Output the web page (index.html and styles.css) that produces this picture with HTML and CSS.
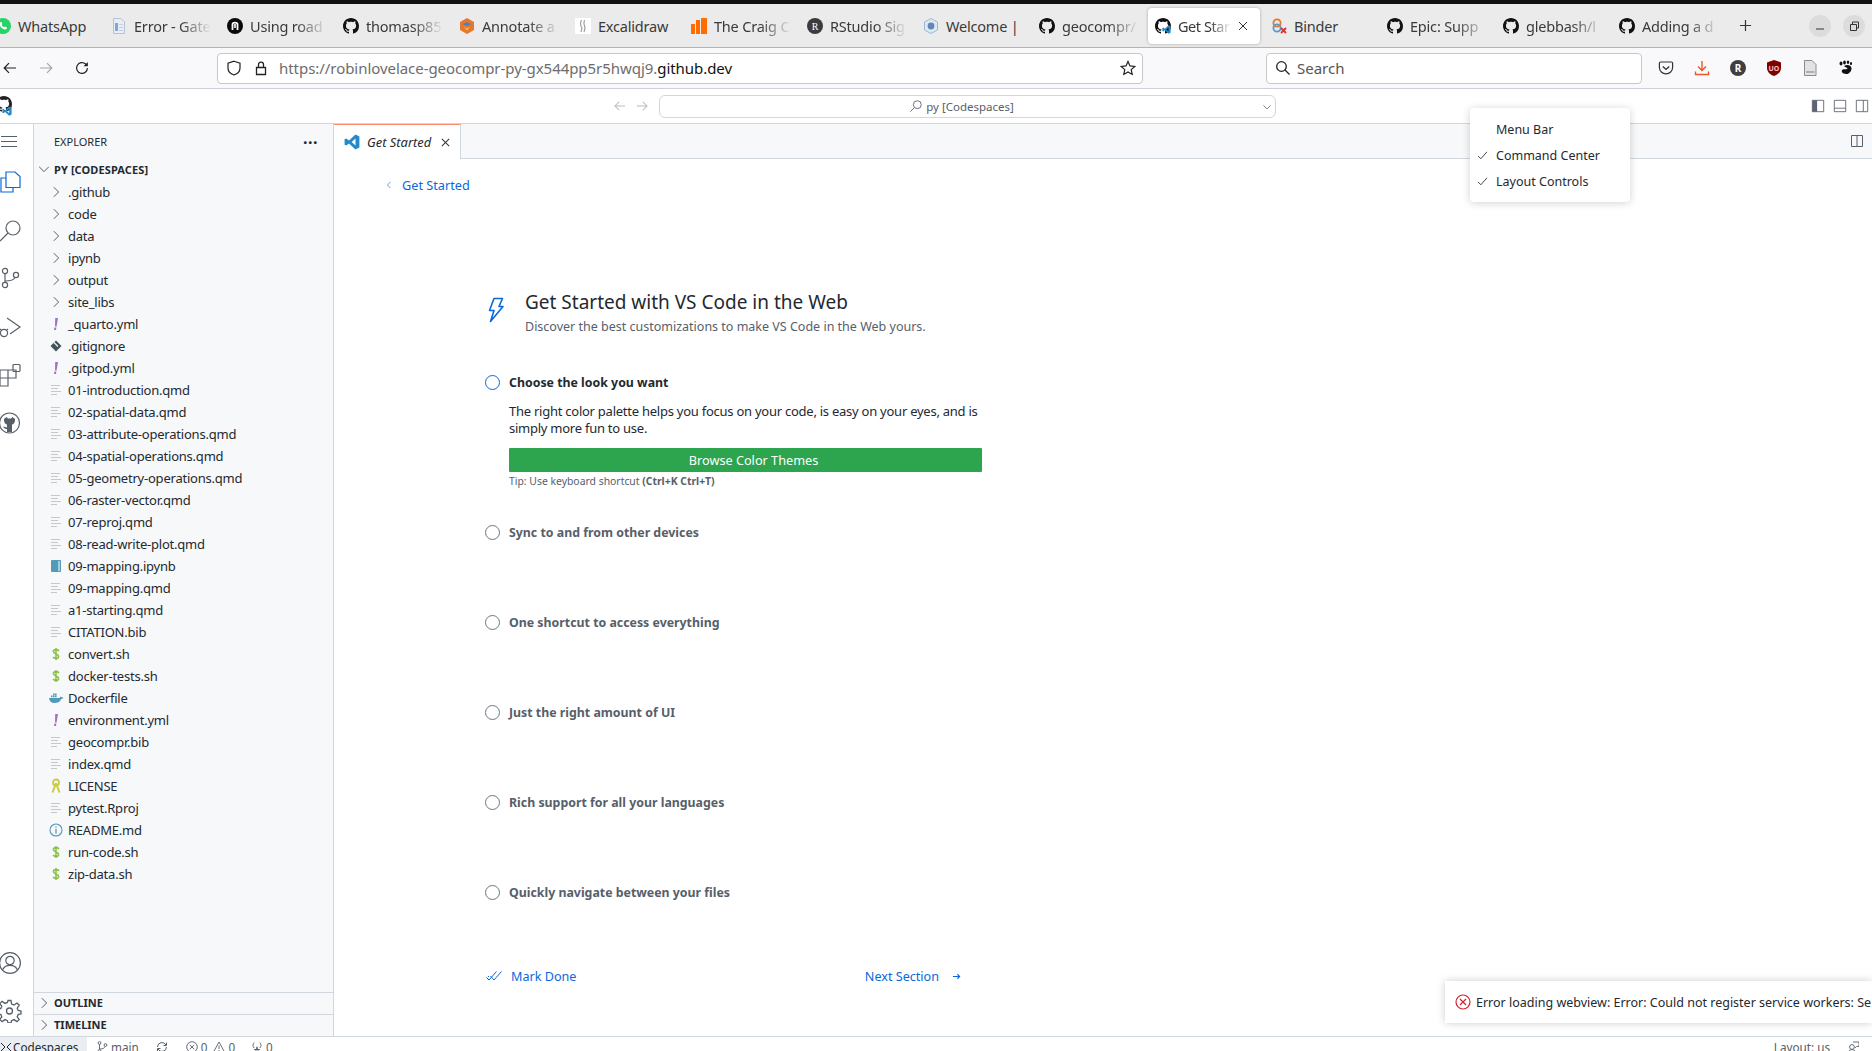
FILE: index.html
```html
<!DOCTYPE html>
<html lang="en">
<head>
<meta charset="utf-8">
<title>Get Started</title>
<link rel="stylesheet" href="styles.css">
</head>
<body>
<svg class="defs" width="0" height="0" aria-hidden="true">
  <symbol id="gh" viewBox="0 0 16 16"><path fill="currentColor" d="M8 0C3.58 0 0 3.58 0 8c0 3.54 2.29 6.53 5.47 7.59.4.07.55-.17.55-.38 0-.19-.01-.82-.01-1.49-2.01.37-2.53-.49-2.69-.94-.09-.23-.48-.94-.82-1.13-.28-.15-.68-.52-.01-.53.63-.01 1.08.58 1.23.82.72 1.21 1.87.87 2.33.66.07-.52.28-.87.51-1.07-1.78-.2-3.64-.89-3.64-3.95 0-.87.31-1.59.82-2.15-.08-.2-.36-1.02.08-2.12 0 0 .67-.21 2.2.82.64-.18 1.32-.27 2-.27.68 0 1.36.09 2 .27 1.53-1.04 2.2-.82 2.2-.82.44 1.1.16 1.92.08 2.12.51.56.82 1.27.82 2.15 0 3.07-1.87 3.75-3.65 3.95.29.25.54.73.54 1.48 0 1.07-.01 1.93-.01 2.2 0 .21.15.46.55.38A8.013 8.013 0 0016 8c0-4.42-3.58-8-8-8z"/></symbol>
  <symbol id="vsc" viewBox="0 0 16 16"><path fill="#2489ca" d="M11.5 0.6 15.4 2.4V13.6L11.5 15.4 5 9.4 2.2 11.6.6 10.8V5.2L2.2 4.4 5 6.6ZM11.5 4.6 7.6 8 11.5 11.4Z"/></symbol>
  <symbol id="chev-r" viewBox="0 0 16 16"><path fill="none" stroke="currentColor" stroke-width="1" d="M5.8 3.2 10.6 8 5.8 12.8"/></symbol>
  <symbol id="chev-d" viewBox="0 0 16 16"><path fill="none" stroke="currentColor" stroke-width="1" d="M3.2 5.8 8 10.6 12.8 5.8"/></symbol>
  <symbol id="lines" viewBox="0 0 16 16"><path fill="none" stroke="#c4c7cc" stroke-width="1" d="M3 3.5H12M3 6.5H10M3 9.5H13M3 12.5H9"/></symbol>
  <symbol id="bang" viewBox="0 0 16 16"><path fill="#a074c4" d="M7.2 2H10L8.6 10.4H7ZM6.4 11.6H8.4L8 14H6Z"/></symbol>
  <symbol id="dollar" viewBox="0 0 16 16"><path fill="none" stroke="#8dc149" stroke-width="1.6" d="M10.6 5.2C10.6 4 9.4 3.6 8 3.6S5.4 4.2 5.4 5.6C5.4 8.6 10.6 7.4 10.6 10.4 10.6 11.8 9.4 12.4 8 12.4S5.4 12 5.4 10.8M8 2V14"/></symbol>
  <symbol id="split" viewBox="0 0 16 16"><path fill="none" stroke="currentColor" stroke-width="1" d="M2.5 2.5H13.5V13.5H2.5ZM8 2.5V13.5"/></symbol>
  <symbol id="search" viewBox="0 0 16 16"><circle cx="9.5" cy="6.5" r="4.5" fill="none" stroke="currentColor"/><path fill="none" stroke="currentColor" d="M6.2 9.8 1.5 14.5"/></symbol>
  <symbol id="arrow-l" viewBox="0 0 16 16"><path fill="none" stroke="currentColor" stroke-width="1.2" d="M14 8H2.5M7 3.2 2.2 8 7 12.8"/></symbol>
  <symbol id="arrow-r" viewBox="0 0 16 16"><path fill="none" stroke="currentColor" stroke-width="1.2" d="M2 8H13.5M9 3.2 13.8 8 9 12.8"/></symbol>
  <symbol id="check" viewBox="0 0 16 16"><path fill="none" stroke="currentColor" stroke-width="1.2" d="M2.5 8.5 6 12 13.5 3.5"/></symbol>
</svg>

<div class="topblack"></div>

<div class="tabstrip">
  <div class="tab"><svg class="fav" viewBox="0 0 16 16"><circle cx="8" cy="8" r="8" fill="#25d366"/><path fill="#fff" d="M5.3 4.2 6.6 4 7.4 6 6.7 7C7.2 8 8 8.8 9.1 9.3L10 8.5 12 9.4 11.7 10.8C10.8 12 8.4 11.6 6.4 9.7 4.6 8 4 5.6 5.3 4.2Z"/></svg><span class="tab-title clear">WhatsApp</span></div>
  <div class="tab"><svg class="fav" viewBox="0 0 16 16"><path fill="#e8eef6" stroke="#b6c3d3" d="M2.5.5H10L13.5 4V15.5H2.5Z"/><path fill="#7fa8d8" d="M4 5H7V13H4Z"/><path fill="#c4d0de" d="M8 6H12V7H8ZM8 9H12V10H8ZM8 12H12V13H8Z"/></svg><span class="tab-title">Error - Gate</span></div>
  <div class="tab"><svg class="fav" viewBox="0 0 16 16"><circle cx="8" cy="8" r="8" fill="#0a0a0a"/><path fill="none" stroke="#fff" stroke-width="1.8" d="M5.5 12V6.6C5.5 4 10.5 4 10.5 6.6V12"/><path stroke="#fff" stroke-width="1.6" d="M8 6V10"/></svg><span class="tab-title">Using road</span></div>
  <div class="tab"><svg class="fav dark"><use href="#gh"/></svg><span class="tab-title">thomasp85</span></div>
  <div class="tab"><svg class="fav" viewBox="0 0 16 16"><path fill="#e8762d" d="M8 0 15 4V12L8 16 1 12V4Z"/><path fill="#3f87c6" d="M3.5 6 8 4.2 12.5 6 8 8.2Z"/><path fill="#f6c343" d="M5 9 8 10.5 11 9 8 12.5Z"/></svg><span class="tab-title">Annotate a</span></div>
  <div class="tab"><svg class="fav" viewBox="0 0 16 16"><rect width="16" height="16" fill="#fff"/><path fill="none" stroke="#a0a0a0" stroke-width="1.2" d="M6.5 2C5 5 5.5 8 7 10L6 14M9.5 2C8 5 9.5 8 10 10L9 14"/></svg><span class="tab-title clear">Excalidraw</span></div>
  <div class="tab"><svg class="fav" viewBox="0 0 16 16"><path fill="#ff6d00" d="M0 6H4V16H0ZM5 2H9V16H5ZM10 0H16V16H10Z"/></svg><span class="tab-title">The Craig C</span></div>
  <div class="tab"><svg class="fav" viewBox="0 0 16 16"><circle cx="8" cy="8" r="8" fill="#3c3c3c"/><text class="fav-r" x="8" y="11.5">R</text></svg><span class="tab-title">RStudio Sig</span></div>
  <div class="tab"><svg class="fav" viewBox="0 0 16 16"><path fill="#dfe8f2" stroke="#9db7d6" d="M8 .5 14.5 4V12L8 15.5 1.5 12V4Z"/><circle cx="8" cy="8" r="3.4" fill="#5f86b5"/></svg><span class="tab-title clear">Welcome |</span></div>
  <div class="tab"><svg class="fav dark"><use href="#gh"/></svg><span class="tab-title">geocompr/</span></div>
  <div class="tab active"><svg class="fav dark"><use href="#gh"/><use href="#vsc" x="7" y="7" width="9" height="9"/></svg><span class="tab-title">Get Start</span><svg class="tab-x" viewBox="0 0 12 12"><path stroke="currentColor" d="M2 2 10 10M10 2 2 10"/></svg></div>
  <div class="tab"><svg class="fav" viewBox="0 0 16 16"><circle cx="6" cy="5" r="3.6" fill="none" stroke="#e8762d" stroke-width="1.8"/><circle cx="6" cy="10" r="3.6" fill="none" stroke="#579aca" stroke-width="1.8"/><path stroke="#e03030" stroke-width="1.8" d="M10 10 15 15M15 10 10 15"/></svg><span class="tab-title clear">Binder</span></div>
  <div class="tab"><svg class="fav dark"><use href="#gh"/></svg><span class="tab-title">Epic: Supp</span></div>
  <div class="tab"><svg class="fav dark"><use href="#gh"/></svg><span class="tab-title">glebbash/l</span></div>
  <div class="tab"><svg class="fav dark"><use href="#gh"/></svg><span class="tab-title">Adding a d</span></div>
  <svg class="newtab" viewBox="0 0 14 14"><path stroke="currentColor" stroke-width="1.3" d="M7 1V13M1 7H13"/></svg>
  <div class="winctl">
    <span class="winbtn"><svg viewBox="0 0 12 12"><path stroke="#333" d="M2 9H10"/></svg></span>
    <span class="winbtn"><svg viewBox="0 0 12 12"><path fill="none" stroke="#333" d="M2.5 4.5H8.5V10.5H2.5ZM4.5 4V2H10.5V8H9"/></svg></span>
  </div>
</div>

<div class="toolbar">
  <div class="navbtns">
    <svg class="nav-ic"><use href="#arrow-l"/></svg>
    <svg class="nav-ic off"><use href="#arrow-r"/></svg>
    <svg class="nav-ic" viewBox="0 0 16 16"><path fill="none" stroke="currentColor" stroke-width="1.2" d="M13.4 8A5.4 5.4 0 1 1 11.6 4L13.2 5.4"/><path fill="currentColor" d="M13.8 2V6.2H9.6Z"/></svg>
  </div>
  <div class="urlbar">
    <svg class="url-ic" viewBox="0 0 16 16"><path fill="none" stroke="#222" stroke-width="1.2" d="M8 1.2 14 3.2V8C14 11.5 11 14 8 15 5 14 2 11.5 2 8V3.2Z"/></svg>
    <svg class="url-ic" viewBox="0 0 16 16"><path fill="none" stroke="#222" stroke-width="1.3" d="M3.5 7.5H12.5V14.5H3.5ZM5.5 7.5V4.5C5.5 1.2 10.5 1.2 10.5 4.5V7.5"/></svg>
    <span class="url"><span class="url-dim">https://robinlovelace-geocompr-py-gx544pp5r5hwqj9.</span>github.dev</span>
    <svg class="url-star" viewBox="0 0 16 16"><path fill="none" stroke="#222" stroke-width="1.2" d="M8 1.4 10 5.9 14.8 6.4 11.2 9.6 12.2 14.4 8 11.9 3.8 14.4 4.8 9.6 1.2 6.4 6 5.9Z"/></svg>
  </div>
  <div class="searchbar">
    <svg class="url-ic small" viewBox="0 0 16 16"><circle cx="6.5" cy="6.5" r="4.8" fill="none" stroke="#222" stroke-width="1.3"/><path stroke="#222" stroke-width="1.3" d="M10 10 14.5 14.5"/></svg>
    <span>Search</span>
  </div>
  <div class="extbtns">
    <svg viewBox="0 0 16 16"><path fill="none" stroke="#333" stroke-width="1.2" d="M2.6 2H13.4C14.2 2 14.6 2.6 14.6 3.2V7.4C14.6 11 11.6 13.8 8 13.8S1.4 11 1.4 7.4V3.2C1.4 2.6 1.8 2 2.6 2Z"/><path fill="none" stroke="#333" stroke-width="1.4" d="M4.8 6.4 8 9.4 11.2 6.4"/></svg>
    <svg viewBox="0 0 16 16"><path fill="none" stroke="#e8592a" stroke-width="1.4" d="M8 1V10M4 6.5 8 10.5 12 6.5M1.5 11.5V14.5H14.5V11.5"/></svg>
    <svg viewBox="0 0 16 16"><circle cx="8" cy="8" r="8" fill="#3f3f3f"/><text class="fav-r bold" x="8" y="11.5">R</text></svg>
    <svg viewBox="0 0 16 16"><path fill="#800000" d="M8 0 15 2.4V8C15 12 11.5 15 8 16 4.5 15 1 12 1 8V2.4Z"/><text class="fav-u" x="8" y="10.5">UO</text></svg>
    <svg viewBox="0 0 16 16"><path fill="#e2e2e2" stroke="#8c8c8c" d="M2.5.5H10L14 4.5V15.5H2.5Z"/><path fill="#b0b0b0" d="M4 11H12.5V13H4Z"/></svg>
    <svg viewBox="0 0 16 16"><path fill="#111" d="M6 6C9 4 13 5 13.5 8 13.8 11 11 14.5 8 14 5 13.8 3 12 4 10 5 8.2 9 10 9.5 8.5 9.5 7.5 7.5 7.6 6 6ZM3 1.5A1.5 2 0 1 1 3 5.5 1.5 2 0 1 1 3 1.5ZM6.5 .5A1.4 2 0 1 1 6.5 4.5 1.4 2 0 1 1 6.5 .5ZM10 .6A1.3 1.7 0 1 1 10 4 1.3 1.7 0 1 1 10 .6ZM13 2A1.1 1.5 0 1 1 13 5 1.1 1.5 0 1 1 13 2Z"/></svg>
  </div>
</div>

<div class="titlebar">
  <svg class="tb-logo" viewBox="0 0 16 20"><use href="#gh" width="16" height="16"/><use href="#vsc" x="6" y="10" width="10" height="10"/></svg>
  <div class="tb-center">
    <svg class="tb-arrow"><use href="#arrow-l"/></svg>
    <svg class="tb-arrow"><use href="#arrow-r"/></svg>
    <div class="command"><svg class="cmd-ic"><use href="#search"/></svg><span>py [Codespaces]</span><svg class="cmd-chev"><use href="#chev-d"/></svg></div>
  </div>
  <div class="layout-ctl">
    <svg viewBox="0 0 16 16"><path fill="#5b6270" d="M1.5 1.5H7V14.5H1.5Z"/><path fill="none" stroke="#5b6270" d="M1.5 1.5H14.5V14.5H1.5Z"/></svg>
    <svg viewBox="0 0 16 16"><path fill="none" stroke="#5b6270" d="M1.5 1.5H14.5V14.5H1.5ZM1.5 10.5H14.5"/></svg>
    <svg viewBox="0 0 16 16"><path fill="none" stroke="#5b6270" d="M1.5 1.5H14.5V14.5H1.5ZM9.5 1.5V14.5"/></svg>
  </div>
</div>

<div class="workbench">
  <nav class="activity">
    <svg class="act first" viewBox="0 0 24 24"><path stroke="currentColor" stroke-width="1.1" d="M2 6.5H18M2 11.5H18M2 16.5H18"/></svg>
    <svg class="act big sel" viewBox="0 0 24 24"><path fill="#fff" stroke="currentColor" stroke-width="1.2" d="M2 8H14V22H2Z"/><path fill="#fff" stroke="currentColor" stroke-width="1.2" d="M7 2H16L21 6.5V17.5H7Z"/></svg>
    <svg class="act big" viewBox="0 0 24 24"><circle cx="14" cy="10" r="7" fill="none" stroke="currentColor" stroke-width="1.2"/><path stroke="currentColor" stroke-width="1.2" d="M9 15 1 23"/></svg>
    <svg class="act big" viewBox="0 0 24 24"><g fill="none" stroke="currentColor" stroke-width="1.2"><circle cx="6" cy="5" r="2.6"/><circle cx="6" cy="19" r="2.6"/><circle cx="17" cy="9" r="2.6"/><path d="M6 7.6V16.4M6 15C12 15 15 14 16 11.4"/></g></svg>
    <svg class="act big" viewBox="0 0 24 24"><g fill="none" stroke="currentColor" stroke-width="1.2"><path d="M8 3 21 12 11 19"/><circle cx="5" cy="18" r="3.6"/><path d="M1 14 3 15.6M9 14 7 15.6M0 18H1.4"/></g></svg>
    <svg class="act big" viewBox="0 0 24 24"><g fill="none" stroke="currentColor" stroke-width="1.2"><path d="M1 10H9V18H1ZM9 10H17V18H9ZM1 18H9V26H1Z" transform="translate(0 -3)"/><rect x="14" y="1.5" width="7" height="7" rx="1"/></g></svg>
    <svg class="act big" viewBox="0 0 24 24"><circle cx="10.5" cy="12" r="10" fill="none" stroke="currentColor" stroke-width="1.2"/><path fill="currentColor" d="M5 8 7.5 6 9 7.4H12L13.5 6 16 8C16.4 11 15 13 13 13.6V21H8V18C6 18.4 5 17.4 4 15.6L8 16.4V13.6C6 13 4.6 11 5 8Z"/></svg>
    <div class="act-spacer"></div>
    <svg class="act big" viewBox="0 0 24 24"><g fill="none" stroke="currentColor" stroke-width="1.2"><circle cx="11" cy="12" r="10.4"/><circle cx="11" cy="9.5" r="4.2"/><path d="M3.5 19C5 15.5 7.5 14.4 11 14.4S17 15.5 18.5 19"/></g></svg>
    <svg class="act big last" viewBox="0 0 24 24"><g fill="none" stroke="currentColor" stroke-width="1.3"><circle cx="10.5" cy="12" r="3"/><path d="M9 1.5H12L12.6 5 15 6 18 4 20.2 6.2 18.2 9.2 19.2 11.4 22 12V15L19.2 15.4 18.2 17.8 20.2 20.4 18 22.6 15 20.6 12.6 21.6 12 24H9L8.4 21.6 6 20.6 3 22.6.8 20.4 2.8 17.8 1.8 15.4-1 15V10L1.8 9.6 2.8 7.2.8 4.6 3 2.4 6 4.4 8.4 3.4Z"/></g></svg>
  </nav>

  <aside class="sidebar">
    <div class="side-head"><span>EXPLORER</span><span class="dots">···</span></div>
    <div class="root"><svg class="ch-root"><use href="#chev-d"/></svg><span>PY [CODESPACES]</span></div>
    <ul class="tree">
      <li><svg class="ti chev"><use href="#chev-r"/></svg>.github</li>
      <li><svg class="ti chev"><use href="#chev-r"/></svg>code</li>
      <li><svg class="ti chev"><use href="#chev-r"/></svg>data</li>
      <li><svg class="ti chev"><use href="#chev-r"/></svg>ipynb</li>
      <li><svg class="ti chev"><use href="#chev-r"/></svg>output</li>
      <li><svg class="ti chev"><use href="#chev-r"/></svg>site_libs</li>
      <li><svg class="ti"><use href="#bang"/></svg>_quarto.yml</li>
      <li><svg class="ti" viewBox="0 0 16 16"><path fill="#41535b" d="M8 2.5 13.5 8 8 13.5 2.5 8Z"/><path stroke="#fff" stroke-width="1.1" d="M6 4.5 10 8.5"/></svg>.gitignore</li>
      <li><svg class="ti"><use href="#bang"/></svg>.gitpod.yml</li>
      <li><svg class="ti"><use href="#lines"/></svg>01-introduction.qmd</li>
      <li><svg class="ti"><use href="#lines"/></svg>02-spatial-data.qmd</li>
      <li><svg class="ti"><use href="#lines"/></svg>03-attribute-operations.qmd</li>
      <li><svg class="ti"><use href="#lines"/></svg>04-spatial-operations.qmd</li>
      <li><svg class="ti"><use href="#lines"/></svg>05-geometry-operations.qmd</li>
      <li><svg class="ti"><use href="#lines"/></svg>06-raster-vector.qmd</li>
      <li><svg class="ti"><use href="#lines"/></svg>07-reproj.qmd</li>
      <li><svg class="ti"><use href="#lines"/></svg>08-read-write-plot.qmd</li>
      <li><svg class="ti" viewBox="0 0 16 16"><rect x="3" y="2" width="10" height="12" rx="1" fill="#519aba"/><path stroke="#fff" d="M11 3V13"/></svg>09-mapping.ipynb</li>
      <li><svg class="ti"><use href="#lines"/></svg>09-mapping.qmd</li>
      <li><svg class="ti"><use href="#lines"/></svg>a1-starting.qmd</li>
      <li><svg class="ti"><use href="#lines"/></svg>CITATION.bib</li>
      <li><svg class="ti"><use href="#dollar"/></svg>convert.sh</li>
      <li><svg class="ti"><use href="#dollar"/></svg>docker-tests.sh</li>
      <li><svg class="ti" viewBox="0 0 16 16"><path fill="#519aba" d="M1 8H11.5C12 6.6 13 6.6 13.6 7.2 14.4 7 15 7.2 15.4 7.8 14.6 8.8 14 9 13.2 9 12 12 9.5 13 6.5 13 3 13 1.4 11 1 8ZM3 5.6H4.6V7.2H3ZM5 5.6H6.6V7.2H5ZM7 5.6H8.6V7.2H7ZM5 3.6H6.6V5.2H5ZM7 3.6H8.6V5.2H7Z"/></svg>Dockerfile</li>
      <li><svg class="ti"><use href="#bang"/></svg>environment.yml</li>
      <li><svg class="ti"><use href="#lines"/></svg>geocompr.bib</li>
      <li><svg class="ti"><use href="#lines"/></svg>index.qmd</li>
      <li><svg class="ti" viewBox="0 0 16 16"><path fill="none" stroke="#cbcb41" stroke-width="2" d="M8 5 4.5 14.5M8 5 11.5 14.5"/><circle cx="8" cy="4.5" r="3" fill="none" stroke="#cbcb41" stroke-width="1.8"/></svg>LICENSE</li>
      <li><svg class="ti"><use href="#lines"/></svg>pytest.Rproj</li>
      <li><svg class="ti" viewBox="0 0 16 16"><circle cx="8" cy="8" r="6" fill="none" stroke="#519aba" stroke-width="1.1"/><path stroke="#519aba" stroke-width="1.3" d="M8 7V11.5M8 4.4V5.8"/></svg>README.md</li>
      <li><svg class="ti"><use href="#dollar"/></svg>run-code.sh</li>
      <li><svg class="ti"><use href="#dollar"/></svg>zip-data.sh</li>
    </ul>
    <div class="pane"><svg class="ch-root"><use href="#chev-r"/></svg><span>OUTLINE</span></div>
    <div class="pane"><svg class="ch-root"><use href="#chev-r"/></svg><span>TIMELINE</span></div>
  </aside>

  <main class="editor">
    <div class="tabsbar">
      <div class="edtab"><svg class="edtab-ic"><use href="#vsc"/></svg><span>Get Started</span><svg class="edtab-x" viewBox="0 0 12 12"><path stroke="currentColor" stroke-width="1.1" d="M2 2 10 10M10 2 2 10"/></svg></div>
      <svg class="splitbtn"><use href="#split"/></svg>
    </div>
    <div class="page">
      <a class="back"><svg class="back-ic"><use href="#chev-r"/></svg>Get Started</a>
      <header class="intro">
        <svg class="bolt" viewBox="0 0 16 26"><path fill="none" stroke="#0969da" stroke-width="1.6" stroke-linejoin="round" d="M6 1.5H14.5L11 9.5H15L2.5 24.5 6 13.5H1.5Z"/></svg>
        <div>
          <h1>Get Started with VS Code in the Web</h1>
          <p>Discover the best customizations to make VS Code in the Web yours.</p>
        </div>
      </header>
      <section class="steps">
        <div class="step open">
          <div class="step-title"><span class="radio on"></span><strong>Choose the look you want</strong></div>
          <div class="step-body">
            <p>The right color palette helps you focus on your code, is easy on your eyes, and is simply more fun to use.</p>
            <button class="primary">Browse Color Themes</button>
            <div class="tip">Tip: Use keyboard shortcut <b>(Ctrl+K Ctrl+T)</b></div>
          </div>
        </div>
        <div class="step"><div class="step-title"><span class="radio"></span><strong>Sync to and from other devices</strong></div></div>
        <div class="step"><div class="step-title"><span class="radio"></span><strong>One shortcut to access everything</strong></div></div>
        <div class="step"><div class="step-title"><span class="radio"></span><strong>Just the right amount of UI</strong></div></div>
        <div class="step"><div class="step-title"><span class="radio"></span><strong>Rich support for all your languages</strong></div></div>
        <div class="step"><div class="step-title"><span class="radio"></span><strong>Quickly navigate between your files</strong></div></div>
      </section>
      <footer class="actions">
        <a class="mark"><svg class="mark-ic" viewBox="0 0 16 16"><path fill="none" stroke="currentColor" d="M.5 9.5 3 12 10.5 3.5M4.5 8 8 12 15.5 3.5M2 8 3 9"/></svg>Mark Done</a>
        <a class="next">Next Section<svg class="next-ic" viewBox="0 0 10 10"><path fill="none" stroke="currentColor" stroke-width="1.2" d="M1 5H8.5M6 2.5 8.5 5 6 7.5"/></svg></a>
      </footer>
    </div>
  </main>
</div>

<div class="statusbar">
  <div class="remote"><svg class="st-ic" viewBox="0 0 12 12"><path fill="none" stroke="currentColor" d="M8 2 4 6 8 10M-2 2 2 6-2 10" transform="translate(3 0)"/></svg><span>Codespaces</span></div>
  <span class="st-item st-main"><svg class="st-ic" viewBox="0 0 12 12"><g fill="none" stroke="currentColor" stroke-width=".9"><circle cx="3.5" cy="2" r="1.4"/><circle cx="3.5" cy="10" r="1.4"/><circle cx="9.5" cy="4" r="1.4"/><path d="M3.5 3.4V8.6M3.5 8C7 8 8.6 7 9.2 5.4"/></g></svg>main</span>
  <span class="st-item st-sync"><svg class="st-ic" viewBox="0 0 12 12"><path fill="none" stroke="currentColor" d="M1.5 6A4.5 4.5 0 0 1 10 4M10.5 6A4.5 4.5 0 0 1 2 8M10.5 1.5V4.5H7.5M1.5 10.5V7.5H4.5"/></svg></span>
  <span class="st-item st-err"><svg class="st-ic" viewBox="0 0 12 12"><circle cx="6" cy="6" r="5.3" fill="none" stroke="currentColor" stroke-width=".9"/><path stroke="currentColor" stroke-width=".9" d="M3.8 3.8 8.2 8.2M8.2 3.8 3.8 8.2"/></svg>0<svg class="st-ic warn" viewBox="0 0 12 12"><path fill="none" stroke="currentColor" stroke-width=".9" d="M6 1 11.5 11H.5ZM6 4.5V8M6 9V10"/></svg>0</span>
  <span class="st-item st-radio"><svg class="st-ic" viewBox="0 0 12 12"><g fill="none" stroke="currentColor" stroke-width=".9"><path d="M6 5V5.4M4.5 11 6 6 7.5 11M3 8.5 9 8.5"/><path d="M3.2 1.5C1.6 3 1.6 5.5 3.2 7M8.8 1.5C10.4 3 10.4 5.5 8.8 7"/></g></svg>0</span>
  <span class="st-spacer"></span>
  <span class="st-item st-layout">Layout: us</span>
  <svg class="st-ic st-feedback" viewBox="0 0 12 12"><g fill="none" stroke="currentColor" stroke-width=".9"><circle cx="5" cy="6" r="2.4"/><path d="M1 12C1.6 9.6 3 8.6 5 8.6S8.4 9.6 9 12M6 1H12V5.5H9.5L8 7"/></g></svg>
</div>

<div class="popup">
  <div class="popup-item">Menu Bar</div>
  <div class="popup-item"><svg class="popup-check"><use href="#check"/></svg>Command Center</div>
  <div class="popup-item"><svg class="popup-check"><use href="#check"/></svg>Layout Controls</div>
</div>

<div class="toast">
  <svg class="toast-ic" viewBox="0 0 16 16"><circle cx="8" cy="8" r="7" fill="none" stroke="#cf222e" stroke-width="1.2"/><path stroke="#cf222e" stroke-width="1.2" d="M5 5 11 11M11 5 5 11"/></svg>
  <span>Error loading webview: Error: Could not register service workers: Se</span>
</div>
</body>
</html>
```

FILE: styles.css
```css
* { box-sizing: border-box; }
html, body { margin: 0; padding: 0; }
body {
  width: 1872px;
  height: 1051px;
  overflow: hidden;
  position: relative;
  background: #fff;
  font-family: "Noto Sans", "Open Sans", sans-serif;
  color: #24292f;
  font-size: 13px;
}
.defs { position: absolute; }
a { color: inherit; }
svg { display: block; flex: none; }

.topblack { height: 4px; background: #111; }

.tabstrip {
  height: 44px;
  background: #ebebeb;
  border-bottom: 1px solid #b4b4b4;
  display: flex;
  align-items: center;
  margin-left: -14px;
  width: 1886px;
  color: #3a3a3a;
  font-size: 14.5px;
}
.tab {
  width: 116px;
  height: 36px;
  display: flex;
  align-items: center;
  gap: 7px;
  padding-left: 9px;
  flex: none;
}
.fav { width: 16px; height: 16px; }
.fav.dark { color: #111; }
.fav-r { font: 10px "Liberation Serif", serif; fill: #fff; text-anchor: middle; }
.fav-r.bold { font: bold 10px "Noto Sans", sans-serif; }
.fav-u { font: bold 7px "Noto Sans", sans-serif; fill: #f2c4c4; text-anchor: middle; }
.tab-title {
  width: 84px;
  white-space: nowrap;
  -webkit-mask-image: linear-gradient(to right, #000 55%, transparent 92%);
  mask-image: linear-gradient(to right, #000 55%, transparent 92%);
  letter-spacing: -.2px;
}
.tab-title.clear { -webkit-mask-image: none; mask-image: none; }
.tab.active {
  width: 112px;
  margin: 0 2px;
  padding-left: 7px;
  background: #fff;
  border-radius: 4px;
  box-shadow: 0 0 3px rgba(0, 0, 0, .3);
}
.tab.active .tab-title { width: 58px; letter-spacing: -.45px; }
.tab-x { width: 12px; height: 12px; color: #333; margin-left: -6px; }
.newtab { width: 13px; height: 13px; color: #333; margin-left: 13px; }
.winctl { margin-left: auto; display: flex; gap: 12px; padding-right: 7px; }
.winbtn {
  width: 22px;
  height: 22px;
  border-radius: 50%;
  background: #dcdcdc;
  display: flex;
  align-items: center;
  justify-content: center;
}
.winbtn svg { width: 12px; height: 12px; }

.toolbar {
  height: 41px;
  background: #f9f9fb;
  border-bottom: 1px solid #cfcfd8;
  display: flex;
  align-items: center;
}
.navbtns { width: 217px; display: flex; gap: 20px; padding-left: 2px; color: #222; }
.nav-ic { width: 16px; height: 16px; }
.nav-ic.off { color: #a6a6a6; }
.urlbar {
  width: 926px;
  height: 31px;
  background: #fff;
  border: 1px solid #c8c8c8;
  border-radius: 4px;
  display: flex;
  align-items: center;
  padding-left: 8px;
  font-size: 15px;
}
.url-ic { width: 16px; height: 16px; margin-right: 11px; }
.url-ic.small { margin-right: 6px; }
.url { flex: 1; white-space: nowrap; letter-spacing: -.05px; margin-left: -1px; color: #111; }
.url-dim { color: #6d6d6d; }
.url-star { width: 16px; height: 16px; margin-right: 6px; }
.searchbar {
  width: 376px;
  height: 31px;
  margin-left: 123px;
  background: #fff;
  border: 1px solid #c8c8c8;
  border-radius: 4px;
  display: flex;
  align-items: center;
  padding-left: 8px;
  font-size: 15px;
  color: #555;
}
.extbtns { display: flex; gap: 20px; margin-left: 16px; }
.extbtns svg { width: 16px; height: 16px; }

.titlebar {
  height: 35px;
  background: #fff;
  border-bottom: 1px solid #d0d7de;
  display: flex;
  align-items: center;
  position: relative;
}
.tb-logo { width: 16px; height: 20px; margin-left: -4px; color: #222; }
.tb-center { display: flex; align-items: center; margin-left: 601px; }
.tb-arrow { width: 14px; height: 14px; color: #b8bdc4; margin-right: 8px; }
.command {
  width: 617px;
  height: 23px;
  margin-left: 2px;
  padding-right: 12px;
  border: 1px solid #d0d7de;
  border-radius: 6px;
  display: flex;
  align-items: center;
  justify-content: center;
  gap: 3px;
  font-size: 11.5px;
  color: #57606a;
  position: relative;
}
.cmd-ic { width: 14px; height: 14px; }
.cmd-chev { width: 12px; height: 12px; position: absolute; right: 2px; top: 5px; }
.layout-ctl { margin-left: auto; display: flex; gap: 8px; padding-right: 3px; }
.layout-ctl svg { width: 14px; height: 14px; }

.workbench { height: 912px; display: flex; }
.activity {
  width: 34px;
  height: 912px;
  border-right: 1px solid #d0d7de;
  display: flex;
  flex-direction: column;
  color: #57606a;
  flex: none;
}
.act { width: 24px; height: 24px; margin-left: -1px; }
.act.first { margin-top: 6px; margin-bottom: 16px; }
.act.big { margin-bottom: 24.2px; }
.act.sel { color: #0969da; }
.act.last { margin-bottom: 13px; }
.act-spacer { flex: 1; }

.sidebar {
  width: 300px;
  height: 912px;
  background: #f6f8fa;
  border-right: 1px solid #d0d7de;
  display: flex;
  flex-direction: column;
  flex: none;
}
.side-head {
  height: 35px;
  display: flex;
  align-items: center;
  justify-content: space-between;
  padding: 0 15px 0 20px;
  font-size: 11px;
}
.dots { font-size: 16px; font-weight: 700; line-height: 1; letter-spacing: .5px; }
.root, .pane {
  height: 22px;
  display: flex;
  align-items: center;
  gap: 2px;
  padding: 0 0 2px 2px;
  font-size: 11px;
  font-weight: 700;
  flex: none;
}
.root span { letter-spacing: .1px; }
.ch-root { width: 16px; height: 16px; color: #57606a; }
.tree {
  list-style: none;
  margin: 0;
  padding: 0;
  flex: 1;
}
.tree li {
  height: 22px;
  display: flex;
  align-items: center;
  padding-left: 14px;
  gap: 4px;
  font-size: 13px;
  letter-spacing: -.22px;
  white-space: nowrap;
}
.ti { width: 16px; height: 16px; color: #57606a; }
.pane { border-top: 1px solid #d0d7de; }

.editor { flex: 1; display: flex; flex-direction: column; min-width: 0; }
.tabsbar {
  height: 35px;
  background: #f6f8fa;
  border-bottom: 1px solid #d0d7de;
  display: flex;
  justify-content: space-between;
  align-items: flex-start;
  flex: none;
}
.edtab {
  width: 127px;
  height: 35px;
  background: #fff;
  border-top: 1px solid #fd8c73;
  border-right: 1px solid #d0d7de;
  display: flex;
  align-items: center;
  padding-left: 10px;
  gap: 7px;
  font-style: italic;
  font-size: 12.9px;
}
.edtab-ic { width: 16px; height: 16px; }
.edtab-x { width: 11px; height: 11px; margin-left: 2px; color: #333; }
.splitbtn { width: 16px; height: 16px; margin: 9px 7px 0 0; color: #57606a; }

.page { padding: 16px 0 0 151px; flex: 1; }
.back {
  display: flex;
  align-items: center;
  margin-left: -101px;
  height: 20px;
  color: #0969da;
  gap: 8px;
  font-size: 12.7px;
}
.back-ic { width: 10px; height: 10px; transform: scaleX(-1); }
.intro {
  display: flex;
  gap: 20px;
  margin-top: 94px;
  height: 83px;
  padding-left: 3px;
  align-items: flex-start;
}
.bolt { width: 16px; height: 26px; margin-top: 8px; }
.intro h1 { margin: 0; font-size: 19px; line-height: 26px; font-weight: 400; color: #24292f; padding-left: 1px; }
.intro p { margin: 2px 0 0; padding-left: 1px; font-size: 12.5px; line-height: 20px; color: #57606a; }

.step { height: 90px; width: 500px; }
.step:last-child { height: 84px; }
.step.open { height: 150px; }
.step-title { display: flex; align-items: center; gap: 9px; height: 20px; color: #57606a; }
.step.open .step-title { color: #24292f; }
.step-title strong { font-weight: 700; font-size: 12.35px; }
.radio { width: 15px; height: 15px; border: 1px solid #6e7781; border-radius: 50%; flex: none; }
.radio.on { border-color: #0969da; }
.step-body { padding: 11px 0 0 24px; width: 498px; }
.step-body p { margin: 0; line-height: 17px; width: 473px; letter-spacing: -.25px; }
.primary {
  display: block;
  width: 473px;
  height: 24px;
  margin-top: 11px;
  padding: 0 0 0 16px;
  background: #2da44e;
  color: #fff;
  border: 0;
  border-radius: 1px;
  font: 12.7px "Noto Sans", sans-serif;
}
.tip { font-size: 10.4px; line-height: 18px; color: #57606a; }

.actions { display: flex; width: 475px; height: 20px; justify-content: space-between; align-items: center; color: #0969da; margin-left: 1px; font-size: 12.6px; }
.mark, .next { display: flex; align-items: center; }
.mark { gap: 9px; }
.next { gap: 13px; }
.mark-ic { width: 16px; height: 16px; }
.next-ic { width: 9px; height: 9px; }

.statusbar {
  height: 16px;
  border-top: 1px solid #d0d7de;
  display: flex;
  align-items: flex-start;
  font-size: 11.7px;
  line-height: 20px;
  color: #57606a;
  white-space: nowrap;
  position: relative;
  overflow: hidden;
}
.remote {
  width: 87px;
  height: 16px;
  background: #eaeef2;
  display: flex;
  gap: 1px;
  color: #24292f;
  padding-left: 0;
}
.st-ic { width: 12px; height: 12px; margin-top: 4px; }
.st-item { display: flex; gap: 3px; }
.st-main { margin-left: 9px; }
.st-sync { margin-left: 17px; }
.st-err { margin-left: 18px; }
.st-err .warn { margin-left: 3px; }
.st-radio { margin-left: 16px; }
.st-spacer { flex: 1; }
.st-layout { margin-right: 17px; }
.st-feedback { margin-right: 13px; }

.popup {
  position: absolute;
  left: 1470px;
  top: 108px;
  width: 160px;
  height: 94px;
  padding: 9px 0;
  background: #fff;
  border-radius: 4px;
  box-shadow: 0 1px 8px rgba(0, 0, 0, .18);
}
.popup-item {
  height: 26px;
  line-height: 26px;
  padding-left: 26px;
  position: relative;
  color: #24292f;
  font-size: 12.5px;
}
.popup-check { position: absolute; left: 6px; top: 6px; width: 13px; height: 13px; color: #3d444d; }

.toast {
  position: absolute;
  left: 1445px;
  top: 981px;
  width: 427px;
  height: 42px;
  background: #fff;
  box-shadow: 0 0 8px rgba(0, 0, 0, .2);
  display: flex;
  align-items: center;
  padding-left: 10px;
  gap: 5px;
  font-size: 12.5px;
  white-space: nowrap;
  overflow: hidden;
}
.toast-ic { width: 16px; height: 16px; }
```
